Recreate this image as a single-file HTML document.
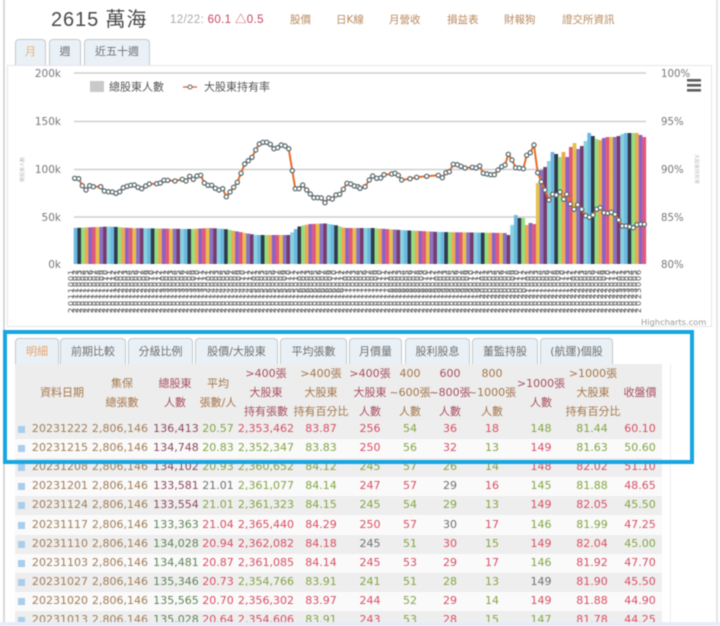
<!DOCTYPE html>
<html lang="zh-Hant">
<head>
<meta charset="utf-8">
<title>2615 萬海</title>
<style>
html,body{margin:0;padding:0;background:#fff}
body{width:720px;height:626px;overflow:hidden;position:relative;font-family:"DejaVu Sans","Noto Sans CJK TC",sans-serif;font-size:11px;color:#666}
#w{position:absolute;left:0;top:0;width:720px;height:626px;overflow:hidden;filter:blur(.5px)}
.a{position:absolute;white-space:nowrap}
.lk{top:13px;color:#b98a5e;font-size:10.5px;line-height:14px}
.tab{position:absolute;box-sizing:border-box;background:#e9f1f7;border:1.5px solid #c3c9cd;border-bottom:0;border-radius:4px 4px 0 0;text-align:center;color:#6f6f6f;font-size:11px}
.t1{top:39px;height:26px;line-height:24px}
.t2{top:338px;height:27px;line-height:25px}
.hc{position:absolute;top:364px;height:57px;display:flex;flex-direction:column;justify-content:center;text-align:center;line-height:19px;transform:translateX(-50%);white-space:nowrap;color:#a5764a;font-size:11px}
table{position:absolute;left:15px;top:420px;width:647px;border-collapse:collapse;table-layout:fixed;font-size:11px;letter-spacing:.02px}
td{height:19.1px;padding:0 0 1px;box-sizing:border-box;text-align:center;white-space:nowrap;line-height:14px}
td:nth-child(14){padding-left:8px}
tr:nth-child(odd){background:#eeeeee}
tr:nth-child(even){background:#fafafa}
td:nth-child(2),td:nth-child(3){color:#a17d58}
.r{color:#d94f63}.g{color:#84a544}.k{color:#707070}.d{color:#8d4a5c}.e{color:#5f8456}
i{display:inline-block;width:7px;height:7px;background:#a9cdec;margin-left:3px;vertical-align:-1px}
</style>
</head>
<body>
<div id="w">
<!-- outer frame -->
<div class="a" style="left:3px;top:0;width:1.5px;height:626px;background:#d8d8d8"></div>
<div class="a" style="left:716px;top:0;width:1.5px;height:626px;background:#e4e4e4"></div>

<!-- title row -->
<div class="a" style="left:51px;top:7px;font-size:20px;line-height:26px;color:#4a4a4a;font-family:'Liberation Sans','Noto Sans CJK TC',sans-serif;letter-spacing:.9px">2615 萬海</div>
<div class="a" style="left:170px;top:13px;font-size:11.5px;line-height:14px;color:#aaa;font-family:'Liberation Sans','Noto Sans CJK TC',sans-serif;letter-spacing:.35px">12/22: <span style="color:#c8445e">60.1 △0.5</span></div>
<div class="a lk" style="left:290px">股價</div>
<div class="a lk" style="left:336px">日K線</div>
<div class="a lk" style="left:389px">月營收</div>
<div class="a lk" style="left:447px">損益表</div>
<div class="a lk" style="left:504px">財報狗</div>
<div class="a lk" style="left:562px">證交所資訊</div>

<!-- upper tabs -->
<div class="tab t1" style="left:15px;width:31px;color:#e8b078">月</div>
<div class="tab t1" style="left:49px;width:32px">週</div>
<div class="tab t1" style="left:84px;width:66px">近五十週</div>

<!-- chart panel -->
<div class="a" style="left:7px;top:65px;width:705px;height:262px;box-sizing:border-box;border:1px solid #e6e6e6;background:#fff"></div>

<svg class="a" id="c" style="left:0;top:0" width="720" height="330" viewBox="0 0 720 330">
  <g stroke="#cfcfcf" stroke-width="1.4">
    <line x1="74" x2="646" y1="73" y2="73"/>
    <line x1="74" x2="646" y1="121.5" y2="121.5"/>
    <line x1="74" x2="646" y1="169.5" y2="169.5"/>
    <line x1="74" x2="646" y1="217" y2="217"/>
  </g>
  <g id="bars"></g>
  <rect x="74" y="264" width="572" height="8" fill="#fff"/>
  <polyline id="ln" fill="none" stroke="#e86d28" stroke-width="2"/>
  <g id="mk" fill="#fff" stroke="#56676c" stroke-width="1.2"></g>

  <g font-family="DejaVu Sans" font-size="10.5" fill="#777" text-anchor="end">
    <text x="61" y="77">200k</text>
    <text x="61" y="125">150k</text>
    <text x="61" y="173">100k</text>
    <text x="61" y="221">50k</text>
    <text x="61" y="268">0k</text>
  </g>
  <g font-family="DejaVu Sans" font-size="10.2" fill="#777">
    <text x="661" y="77">100%</text>
    <text x="661" y="125">95%</text>
    <text x="661" y="173">90%</text>
    <text x="661" y="221">85%</text>
    <text x="661" y="268">80%</text>
  </g>
  <g font-family="DejaVu Sans,Noto Sans CJK TC" font-size="5" fill="#bbb">
    <text transform="translate(24,182) rotate(-90)">總股東人數</text>
    <text transform="translate(695,154) rotate(90)">大股東持有率</text>
  </g>

  <!-- legend -->
  <rect x="90" y="81" width="14" height="11" fill="#c9c9c9"/>
  <text x="109" y="90.5" font-family="Noto Sans CJK TC" font-size="11" fill="#555">總股東人數</text>
  <line x1="183" x2="197" y1="87" y2="87" stroke="#d8703a" stroke-width="1.4"/>
  <circle cx="190" cy="87" r="2" fill="#fff" stroke="#666"/>
  <text x="204" y="90.5" font-family="Noto Sans CJK TC" font-size="11" fill="#555">大股東持有率</text>

  <!-- hamburger -->
  <g fill="#5c5c5c">
    <rect x="687" y="79" width="14" height="2.6"/>
    <rect x="687" y="84" width="14" height="2.6"/>
    <rect x="687" y="89" width="14" height="2.6"/>
  </g>

  <text x="641" y="325" font-family="DejaVu Sans" font-size="8.3" fill="#999">Highcharts.com</text>

  <!-- x axis date labels -->
  <g font-family="DejaVu Sans" font-size="8" fill="#707070" stroke="#707070" stroke-width=".15">
    <text x="74" y="275" rotate="270" textLength="572" lengthAdjust="spacing">123456789012123456789012123456789012123456789012123456789012123456789012123456789012123456789012123456789012123456789012123456789012123456789012123456</text>
    <text x="74" y="281" rotate="270" textLength="572" lengthAdjust="spacing">000000000111000000000111000000000111000000000111000000000111000000000111000000000111000000000111000000000111000000000111000000000111000000000111000000</text>
    <text x="74" y="287" rotate="270" textLength="572" lengthAdjust="spacing">000000000000000000000000000000000000000000000000000000000000000000000000000000000000000000000000000000000000000000000000000000000000000000000000000000</text>
    <text x="74" y="293" rotate="270" textLength="572" lengthAdjust="spacing">111111111111222222222222333333333333444444444444555555555555666666666666777777777777888888888888999999999999000000000000111111111111222222222222333333</text>
    <text x="74" y="299" rotate="270" textLength="572" lengthAdjust="spacing">111111111111111111111111111111111111111111111111111111111111111111111111111111111111111111111111111111111111222222222222222222222222222222222222222222</text>
    <text x="74" y="306" rotate="270" textLength="572" lengthAdjust="spacing">000000000000000000000000000000000000000000000000000000000000000000000000000000000000000000000000000000000000000000000000000000000000000000000000000000</text>
    <text x="74" y="313" rotate="270" textLength="572" lengthAdjust="spacing">222222222222222222222222222222222222222222222222222222222222222222222222222222222222222222222222222222222222222222222222222222222222222222222222222222</text>
  </g>
</svg>

<!-- lower tabs -->
<div class="tab t2" style="left:15px;width:44px;color:#e8a468">明細</div>
<div class="tab t2" style="left:60px;width:66px">前期比較</div>
<div class="tab t2" style="left:128px;width:65px">分級比例</div>
<div class="tab t2" style="left:195px;width:83px">股價/大股東</div>
<div class="tab t2" style="left:280px;width:67px">平均張數</div>
<div class="tab t2" style="left:349px;width:53px">月價量</div>
<div class="tab t2" style="left:405px;width:65px">股利股息</div>
<div class="tab t2" style="left:472px;width:66px">董監持股</div>
<div class="tab t2" style="left:540px;width:73px">(航運)個股</div>

<!-- table panel -->
<div class="a" style="left:662px;top:364px;width:8px;height:258px;background:#fff;border-right:1px solid #ececec"></div>
<div class="a" style="left:15px;top:364px;width:647px;height:57px;background:#ededed"></div>
<div class="hc" style="left:62px">資料日期</div>
<div class="hc" style="left:122px">集保<br>總張數</div>
<div class="hc" style="left:175px;color:#a8505f">總股東<br>人數</div>
<div class="hc" style="left:218px">平均<br>張數/人</div>
<div class="hc" style="left:266px;color:#a8505f">&gt;400張<br>大股東<br>持有張數</div>
<div class="hc" style="left:321px">&gt;400張<br>大股東<br>持有百分比</div>
<div class="hc" style="left:370px;color:#a8505f">&gt;400張<br>大股東<br>人數</div>
<div class="hc" style="left:410px">400<br>~600張<br>人數</div>
<div class="hc" style="left:450px;color:#a8505f">600<br>~800張<br>人數</div>
<div class="hc" style="left:492px">800<br>~1000張<br>人數</div>
<div class="hc" style="left:541px;color:#a8505f">&gt;1000張<br>人數</div>
<div class="hc" style="left:593px">&gt;1000張<br>大股東<br>持有百分比</div>
<div class="hc" style="left:640px;color:#a8505f">收盤價</div>

<table>
<colgroup>
<col style="width:15px"><col style="width:60px"><col style="width:60px"><col style="width:52px"><col style="width:32px"><col style="width:64px"><col style="width:46px"><col style="width:52px"><col style="width:28px"><col style="width:52px"><col style="width:32px"><col style="width:66px"><col style="width:36px"><col style="width:52px">
</colgroup>
<tr><td style="text-align:left"><i></i></td><td>20231222</td><td>2,806,146</td><td class="d">136,413</td><td class="g">20.57</td><td class="r">2,353,462</td><td class="r">83.87</td><td class="r">256</td><td class="g">54</td><td class="r">36</td><td class="r">18</td><td class="g">148</td><td class="g">81.44</td><td class="r">60.10</td></tr>
<tr><td style="text-align:left"><i></i></td><td>20231215</td><td>2,806,146</td><td class="d">134,748</td><td class="g">20.83</td><td class="g">2,352,347</td><td class="g">83.83</td><td class="r">250</td><td class="g">56</td><td class="r">32</td><td class="g">13</td><td class="r">149</td><td class="g">81.63</td><td class="g">50.60</td></tr>
<tr><td style="text-align:left"><i></i></td><td>20231208</td><td>2,806,146</td><td class="d">134,102</td><td class="g">20.93</td><td class="g">2,360,652</td><td class="g">84.12</td><td class="g">245</td><td class="g">57</td><td class="g">26</td><td class="g">14</td><td class="r">148</td><td class="r">82.02</td><td class="r">51.10</td></tr>
<tr><td style="text-align:left"><i></i></td><td>20231201</td><td>2,806,146</td><td class="d">133,581</td><td class="k">21.01</td><td class="g">2,361,077</td><td class="g">84.14</td><td class="r">247</td><td class="r">57</td><td class="k">29</td><td class="r">16</td><td class="g">145</td><td class="g">81.88</td><td class="r">48.65</td></tr>
<tr><td style="text-align:left"><i></i></td><td>20231124</td><td>2,806,146</td><td class="d">133,554</td><td class="g">21.01</td><td class="g">2,361,323</td><td class="g">84.15</td><td class="g">245</td><td class="g">54</td><td class="g">29</td><td class="g">13</td><td class="r">149</td><td class="r">82.05</td><td class="g">45.50</td></tr>
<tr><td style="text-align:left"><i></i></td><td>20231117</td><td>2,806,146</td><td class="e">133,363</td><td class="r">21.04</td><td class="r">2,365,440</td><td class="r">84.29</td><td class="r">250</td><td class="r">57</td><td class="k">30</td><td class="r">17</td><td class="g">146</td><td class="g">81.99</td><td class="r">47.25</td></tr>
<tr><td style="text-align:left"><i></i></td><td>20231110</td><td>2,806,146</td><td class="e">134,028</td><td class="r">20.94</td><td class="r">2,362,082</td><td class="r">84.18</td><td class="k">245</td><td class="g">51</td><td class="r">30</td><td class="g">15</td><td class="r">149</td><td class="r">82.04</td><td class="g">45.00</td></tr>
<tr><td style="text-align:left"><i></i></td><td>20231103</td><td>2,806,146</td><td class="e">134,481</td><td class="r">20.87</td><td class="r">2,361,085</td><td class="r">84.14</td><td class="r">245</td><td class="r">53</td><td class="r">29</td><td class="r">17</td><td class="g">146</td><td class="r">81.92</td><td class="r">47.70</td></tr>
<tr><td style="text-align:left"><i></i></td><td>20231027</td><td>2,806,146</td><td class="e">135,346</td><td class="r">20.73</td><td class="g">2,354,766</td><td class="g">83.91</td><td class="g">241</td><td class="g">51</td><td class="g">28</td><td class="g">13</td><td class="k">149</td><td class="r">81.90</td><td class="r">45.50</td></tr>
<tr><td style="text-align:left"><i></i></td><td>20231020</td><td>2,806,146</td><td class="e">135,565</td><td class="r">20.70</td><td class="r">2,356,302</td><td class="r">83.97</td><td class="r">244</td><td class="g">52</td><td class="r">29</td><td class="g">14</td><td class="r">149</td><td class="r">81.88</td><td class="r">44.90</td></tr>
<tr><td style="text-align:left"><i></i></td><td>20231013</td><td>2,806,146</td><td class="e">135,028</td><td class="r">20.64</td><td class="r">2,354,606</td><td class="g">83.91</td><td class="r">243</td><td class="g">53</td><td class="r">28</td><td class="g">15</td><td class="g">147</td><td class="r">81.78</td><td class="r">44.25</td></tr>
</table>

<!-- bottom strip -->
<div class="a" style="left:0;top:622px;width:720px;height:4px;background:#e7edf8"></div>

<!-- highlight box -->
<div class="a" style="left:3px;top:330px;width:691px;height:134px;box-sizing:border-box;border:4px solid #18a6e2"></div>
</div>

<script>
(function(){
var NS='http://www.w3.org/2000/svg',i;
var tops=[[74,228],[85,227.5],[110,226.5],[130,228],[190,229],[210,228],[225,229],[235,231],[245,233],[256,235],[290,235],[293,231],[300,226],[310,224],[325,223.5],[335,225],[345,228],[372,228],[400,230],[440,232],[505,233],[510,235]];
function topAt(x){
  for(var k=0;k<tops.length-1;k++){
    if(x>=tops[k][0]&&x<=tops[k+1][0]){
      var t=(x-tops[k][0])/(tops[k+1][0]-tops[k][0]);
      return tops[k][1]+t*(tops[k+1][1]-tops[k][1]);
    }
  }
  return tops[tops.length-1][1];
}
var over={118:235,119:225,120:215,121:218,122:218,123:225,124:223,125:224};
var right=[183,170,167,161,152,154,157,152,157,147,143,149,146,141,133,136,139,140,138,137,137,137,136,134,133,133,133,133,135,137];
var cols=['#86d3e0','#6cb8e0','#2d3b4c','#93df7f','#f0a850','#8d62c4','#e2587a','#e6c04c','#8a72c4','#773a6c'];
var g=document.getElementById('bars'),n=156,s=572.3/n;
for(i=0;i<n;i++){
  var x=73.7+i*s,r=document.createElementNS(NS,'rect'),y;
  if(i>=126)y=right[i-126];else if(over[i])y=over[i];else y=topAt(x+s/2);
  r.setAttribute('x',x.toFixed(2));r.setAttribute('y',y.toFixed(1));
  r.setAttribute('width',(s+.1).toFixed(2));r.setAttribute('height',(264-y).toFixed(1));
  r.setAttribute('fill',cols[(i+1)%10]);g.appendChild(r);
}
var a=[224,235,236,236,247,257,258,270,269,257,280,260,302,260,313,273,325,275,337,276,348,280,359,275,370,263,381,259,392,256,403,255,414,262,425,266,437,258,448,252,470,251,481,249,492,241,503,241,525,243,547,238,558,243,569,229,580,238,591,228,602,226,613,249,624,256,635,256,646,265,657,270,668,266,679,290,690,276,701,262,712,247,723,220,734,192,745,182,756,172,767,150,778,132,789,127,800,127,811,133,822,146,833,143,844,135,855,138,866,146,877,212,886,266,897,266,908,255,920,270,931,282,942,293,953,293,964,294,975,308,986,294,997,297,1008,285,1019,283,1030,268,1041,250,1052,252,1063,258,1074,260];
var b=[0,265,15,260,28,240,38,228,50,235,62,234,72,224,95,222,105,220,115,226,125,240,150,236,170,232,200,229,235,226,247,233,258,218,268,215,280,193,292,194,303,199,315,204,337,202,348,204,359,198,370,220,381,222,392,224,403,224,414,210,425,200,435,195,445,163,456,180,467,203,478,204,490,206,500,166,511,158,522,135,533,218,544,245,555,270,567,300,578,283,589,285,600,276,611,298,620,283,631,312,642,328,653,314,665,328,677,347,688,352,699,345,710,328,721,323,732,338,743,340,754,337,765,343,776,360,787,378,798,378,809,380,820,383,831,374,842,373,853,373];
var pts=[],m=document.getElementById('mk');
for(i=0;i<a.length;i+=2)pts.push([a[i]/3,100+a[i+1]/3]);
for(i=0;i<b.length;i+=2)pts.push([360+b[i]/3,100+b[i+1]/3]);
document.getElementById('ln').setAttribute('points',pts.map(function(p){return p[0].toFixed(1)+','+p[1].toFixed(1)}).join(' '));
pts.forEach(function(p){
  var c=document.createElementNS(NS,'circle');
  c.setAttribute('cx',p[0].toFixed(1));c.setAttribute('cy',p[1].toFixed(1));c.setAttribute('r','2.1');
  m.appendChild(c);
});
})();
</script>
</body>
</html>
